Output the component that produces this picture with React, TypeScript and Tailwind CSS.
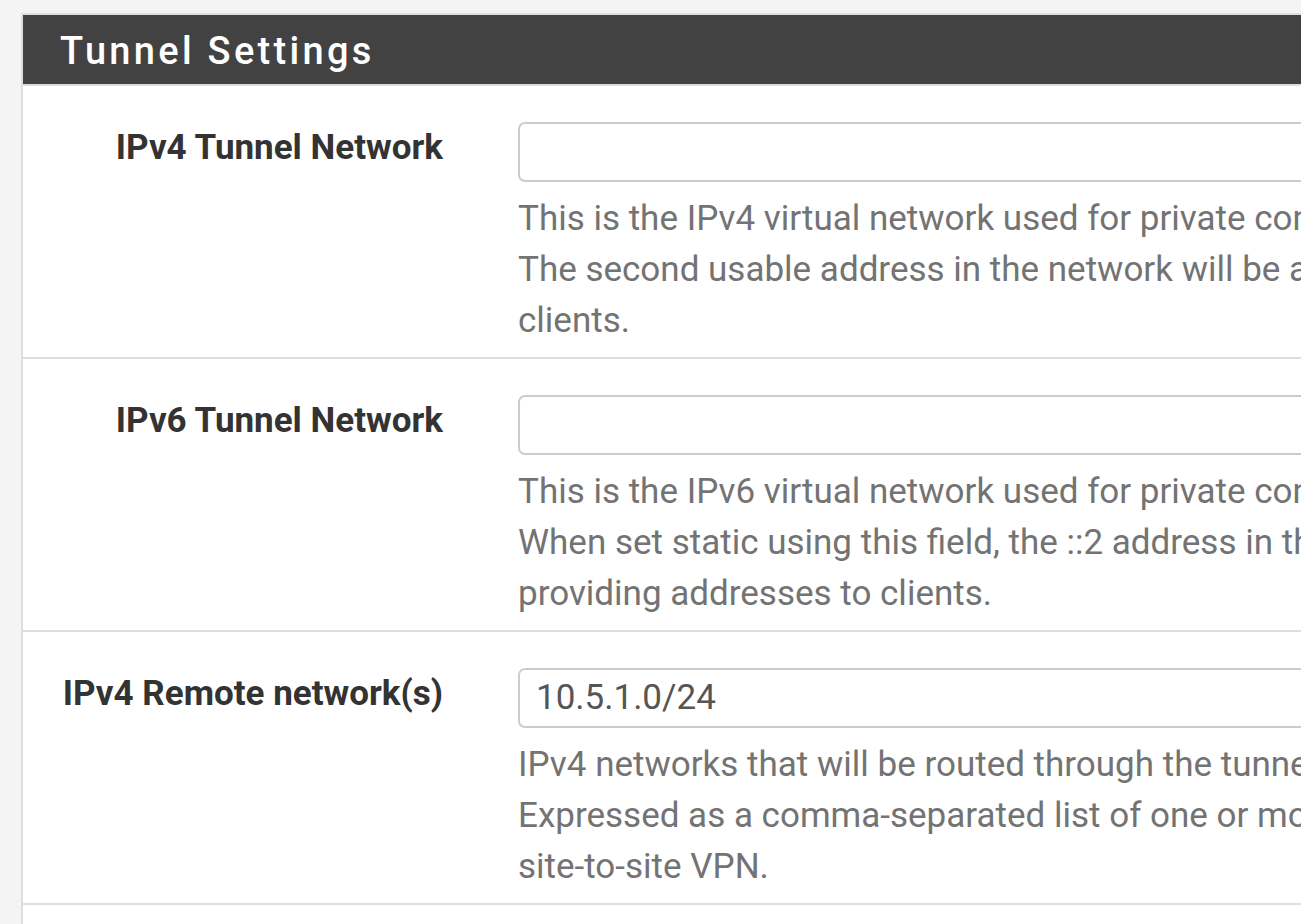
import React from "react";

const rows = [
  {
    label: "IPv4 Tunnel Network",
    value: "",
    help: [
      "This is the IPv4 virtual network used for private communications between this server and client hosts expressed using CIDR notation (e.g. 10.0.8.0/24).",
      "The second usable address in the network will be assigned to the server virtual interface. The remaining usable addresses will be assigned to connecting",
      "clients.",
    ],
  },
  {
    label: "IPv6 Tunnel Network",
    value: "",
    help: [
      "This is the IPv6 virtual network used for private communications between this server and client hosts expressed using CIDR notation (e.g. fe80::/64).",
      "When set static using this field, the ::2 address in the network will be assigned to the server virtual interface. The remaining addresses will be used for",
      "providing addresses to clients.",
    ],
  },
  {
    label: "IPv4 Remote network(s)",
    value: "10.5.1.0/24",
    help: [
      "IPv4 networks that will be routed through the tunnel, so that a site-to-site VPN can be established without manually changing the routing tables.",
      "Expressed as a comma-separated list of one or more CIDR ranges. If this is a site-to-site VPN, enter the remote LAN/s here. May be left blank for non",
      "site-to-site VPN.",
    ],
  },
];

export default function App() {
  return (
    <div className="w-[1301px] h-[924px] overflow-hidden bg-[#f4f4f4] pt-[13px] pl-[21px] font-['Roboto',sans-serif]">
      <div className="w-[1400px] min-h-[1000px] border-l-2 border-t-2 border-[#dedede] bg-white">
        {/* header */}
        <div className="h-[71px] bg-[#424242] border-b-2 border-[#dedede] flex items-center pl-[37px] pt-[2px]">
          <h2 className="text-[38px] font-medium tracking-[3.3px] text-white leading-none">
            Tunnel Settings
          </h2>
        </div>

        {rows.map((r) => (
          <div key={r.label} className="flex border-b-2 border-[#dedede] h-[273px]">
            <div className="w-[434px] shrink-0 pt-[44px] pr-[14px] text-right">
              <span className="text-[35px] font-bold text-[#333333] leading-[36px] whitespace-nowrap">
                {r.label}
              </span>
            </div>
            <div className="pl-[61px] pt-[36px] flex-1 min-w-0">
              <div className="h-[60px] w-[1000px] rounded-[7px] border-2 border-[#cccccc] flex items-center pl-[16px] text-[35px] text-[#555555]">
                {r.value}
              </div>
              <div className="mt-[11px] text-[35px] leading-[51px] text-[#737373] whitespace-nowrap">
                {r.help.map((l, i) => (
                  <div key={i}>{l}</div>
                ))}
              </div>
            </div>
          </div>
        ))}
      </div>
    </div>
  );
}
